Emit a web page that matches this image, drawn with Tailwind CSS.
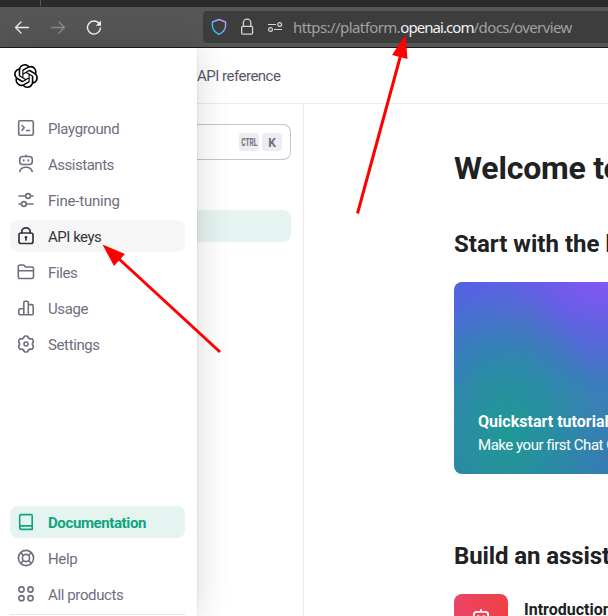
<!DOCTYPE html>
<html lang="en">
<head>
<meta charset="utf-8">
<title>Overview - OpenAI API</title>
<script src="https://cdn.jsdelivr.net/npm/@tailwindcss/browser@4"></script>
</head>
<body class="relative flex h-[616px] w-[608px] flex-col overflow-hidden bg-white font-['Roboto','Liberation_Sans',sans-serif] whitespace-nowrap">
  <!-- Browser chrome -->
  <header class="shrink-0">
    <div class="h-[7px] bg-[#2b2b2b]"><div class="ml-10 h-1.5 w-px bg-[#555]"></div></div>
    <div class="flex h-[41px] items-center border-b border-[#1c1b22] bg-[#565656] pl-[14px]">
      <svg class="size-4 text-[#f2f2f2]" viewBox="0 0 16 16" fill="none" stroke="currentColor" stroke-width="1.3" stroke-linecap="round" stroke-linejoin="round"><path d="M14.500 8.500H1.500M7 3 1.500 8.500 7 14"/></svg>
      <svg class="ml-5 size-4 text-[#8b8b8b]" viewBox="0 0 16 16" fill="none" stroke="currentColor" stroke-width="1.3" stroke-linecap="round" stroke-linejoin="round"><path d="M1.500 8.500h13M9 3 14.500 8.500 9 14"/></svg>
      <svg class="ml-5 size-4 text-[#f2f2f2]" viewBox="0 0 16 16" fill="none" stroke="currentColor" stroke-width="1.4"><path d="M13.300 4.800A6.500 6.500 0 1 0 14.500 8.500"/><path d="M15 1.500v5.200h-5.200z" fill="currentColor" stroke="none"/></svg>
      <div class="ml-[101px] flex h-8 flex-1 items-center rounded-l-[4px] bg-[#3d3d3d] pl-2">
        <svg class="h-[18px] w-4" viewBox="0 0 16 18" fill="none"><defs><linearGradient id="shield" x1="0" y1="1" x2="1" y2="0"><stop offset=".25" stop-color="#2cc4f5"/><stop offset=".85" stop-color="#b79cf5"/></linearGradient></defs><path d="M8 1.500 14.600 4v3.500c0 3.500-2.400 6.800-6.600 8.800C3.800 14.300 1.400 11 1.400 7.500V4z" stroke="url(#shield)" stroke-width="1.400" stroke-linejoin="round"/></svg>
        <svg class="ml-3 h-[18px] w-4" viewBox="0 0 16 18" fill="none" stroke="#d4d4d4" stroke-width="1.300"><rect x="2.650" y="8.300" width="10.900" height="7.800" rx="1"/><path d="M4.400 8V4.800a3.700 3.700 0 0 1 7.400 0V8"/></svg>
        <svg class="ml-3 h-[18px] w-4" viewBox="0 0 16 18" fill="none" stroke="#d4d4d4" stroke-width="1.200"><path d="M1 6.500h8M7 11.500h8"/><circle cx="12.700" cy="6.500" r="1.900"/><circle cx="3.500" cy="11.500" r="1.900"/></svg>
        <p class="ml-[10px] font-['Noto_Sans',sans-serif] text-[15px] tracking-[-0.58px] text-[#a1a1a1]">https://platform.<span class="tracking-[-0.93px] text-[#f2f2f2]">openai.com</span>/docs/overview</p>
      </div>
    </div>
  </header>

  <div class="flex min-h-0 flex-1">
    <!-- Expanded sidebar -->
    <aside class="z-10 flex w-[197px] shrink-0 flex-col bg-white pr-3 pl-[10px] shadow-[0_0_32px_rgba(0,0,0,0.16),0_0_2px_rgba(0,0,0,0.12)]">
      <svg class="mt-4 ml-1 size-6 shrink-0" viewBox="0 0 24 24" fill="#000"><path d="M22.2819 9.8211a5.9847 5.9847 0 0 0-.5157-4.9108 6.0462 6.0462 0 0 0-6.5098-2.9A6.0651 6.0651 0 0 0 4.9807 4.1818a5.9847 5.9847 0 0 0-3.9977 2.9 6.0462 6.0462 0 0 0 .7427 7.0966 5.98 5.98 0 0 0 .511 4.9107 6.051 6.051 0 0 0 6.5146 2.9001A5.9847 5.9847 0 0 0 13.2599 24a6.0557 6.0557 0 0 0 5.7718-4.2058 5.9894 5.9894 0 0 0 3.9977-2.9001 6.0557 6.0557 0 0 0-.7475-7.0729zm-9.022 12.6081a4.4755 4.4755 0 0 1-2.8764-1.0408l.1419-.0804 4.7783-2.7582a.7948.7948 0 0 0 .3927-.6813v-6.7369l2.02 1.1686a.071.071 0 0 1 .038.052v5.5826a4.504 4.504 0 0 1-4.4945 4.4944zm-9.6607-4.1254a4.4708 4.4708 0 0 1-.5346-3.0137l.142.0852 4.783 2.7582a.7712.7712 0 0 0 .7806 0l5.8428-3.3685v2.3324a.0804.0804 0 0 1-.0332.0615L9.74 19.9502a4.4992 4.4992 0 0 1-6.1408-1.6464zM2.3408 7.8956a4.485 4.485 0 0 1 2.3655-1.9728V11.6a.7664.7664 0 0 0 .3879.6765l5.8144 3.3543-2.0201 1.1685a.0757.0757 0 0 1-.071 0l-4.8303-2.7865A4.504 4.504 0 0 1 2.3408 7.872zm16.5963 3.8558L13.1038 8.364 15.1192 7.2a.0757.0757 0 0 1 .071 0l4.8303 2.7913a4.4944 4.4944 0 0 1-.6765 8.1042v-5.6772a.79.79 0 0 0-.407-.667zm2.0107-3.0231l-.142-.0852-4.7735-2.7818a.7759.7759 0 0 0-.7854 0L9.409 9.2297V6.8974a.0662.0662 0 0 1 .0284-.0615l4.8303-2.7866a4.4992 4.4992 0 0 1 6.6802 4.66zM8.3065 12.863l-2.02-1.1638a.0804.0804 0 0 1-.038-.0567V6.0742a4.4992 4.4992 0 0 1 7.3757-3.4537l-.142.0805L8.704 5.459a.7948.7948 0 0 0-.3927.6813zm1.0976-2.3654l2.602-1.4998 2.6069 1.4998v2.9994l-2.5974 1.4997-2.6067-1.4997Z"/></svg>

      <nav class="mt-6 flex flex-col gap-1 text-[15px] tracking-[-0.38px] text-[#6e6e80]">
        <a class="flex h-8 items-center gap-3 rounded-lg px-1.5"><svg class="size-5" viewBox="0 0 20 20" fill="none" stroke="currentColor" stroke-width="1.600" stroke-linecap="round" stroke-linejoin="round"><rect x="2.700" y="2.700" width="14.600" height="14.600" rx="1.500"/><path d="m6 7.500 2.300 2.300L6 12.100M10.500 12.500h3"/></svg><span class="pt-0.5">Playground</span></a>
        <a class="flex h-8 items-center gap-3 rounded-lg px-1.5"><svg class="size-5" viewBox="0 0 20 20" fill="none" stroke="currentColor" stroke-width="1.600" stroke-linecap="round" stroke-linejoin="round"><rect x="3.700" y="2.500" width="12.600" height="8" rx="3"/><path d="M10 1.200v1M3.800 17.500c.6-2.800 3.100-4.300 6.200-4.300s5.600 1.500 6.200 4.300"/><path d="M7.700 6.200v.3M12.300 6.200v.3" stroke-width="1.900"/></svg><span class="pt-0.5 tracking-[-0.48px]">Assistants</span></a>
        <a class="flex h-8 items-center gap-3 rounded-lg px-1.5"><svg class="size-5" viewBox="0 0 20 20" fill="none" stroke="currentColor" stroke-width="1.600" stroke-linecap="round"><path d="M3 6h6.500M14.700 6H17M3 14h2.300M10.500 14H17"/><circle cx="12.100" cy="6" r="2.400"/><circle cx="7.900" cy="14" r="2.400"/></svg><span class="pt-0.5 tracking-[-0.22px]">Fine-tuning</span></a>
        <a class="flex h-8 items-center gap-3 rounded-lg bg-[#f6f6f6] px-1.5 text-[#353740]"><svg class="size-5" viewBox="0 0 20 20" fill="none" stroke="currentColor" stroke-width="1.700" stroke-linecap="round"><rect x="3" y="7" width="14" height="10.500" rx="2"/><path d="M5.800 7V5.800a4.200 4 0 0 1 8.400 0V7M10 12v2"/><circle cx="10" cy="11.300" r="1.300" fill="currentColor" stroke="none"/></svg><span class="pt-0.5 tracking-[-0.48px]">API keys</span></a>
        <a class="flex h-8 items-center gap-3 rounded-lg px-1.5"><svg class="size-5" viewBox="0 0 20 20" fill="none" stroke="currentColor" stroke-width="1.600" stroke-linejoin="round"><path d="M2.300 15V4.500c0-.8.700-1.500 1.500-1.500h3.300c.5 0 .9.200 1.200.6l.7.900c.3.400.7.500 1.100.5h5.800c.9 0 1.600.7 1.600 1.500V15c0 .9-.7 1.500-1.500 1.500H3.800c-.8 0-1.500-.6-1.500-1.500zM2.300 8.700h15.200"/></svg><span class="pt-0.5">Files</span></a>
        <a class="flex h-8 items-center gap-3 rounded-lg px-1.5"><svg class="size-5" viewBox="0 0 20 20" fill="none" stroke="currentColor" stroke-width="1.600" stroke-linejoin="round"><path d="M7.800 16.800H4.200c-.8 0-1.400-.6-1.400-1.400v-3.300c0-.8.6-1.400 1.400-1.400h3.600M12.300 16.800V4.700c0-.9-.6-1.500-1.400-1.500H9.200c-.8 0-1.400.6-1.400 1.500v12.100zM12.300 16.800h3.500c.8 0 1.400-.6 1.400-1.400V8c0-.8-.6-1.400-1.400-1.400h-3.500"/></svg><span class="pt-0.5">Usage</span></a>
        <a class="flex h-8 items-center gap-3 rounded-lg px-1.5"><svg class="size-5" viewBox="0 0 20 20" fill="none" stroke="currentColor" stroke-width="1.600" stroke-linejoin="round"><path d="M8.360 2.270Q10 1.600 11.640 2.270Q12.600 5.500 15.870 4.710Q17.270 5.800 17.510 7.560Q15.200 10 17.510 12.440Q17.270 14.200 15.870 15.290Q12.600 14.500 11.640 17.730Q10 18.400 8.360 17.730Q7.400 14.500 4.130 15.290Q2.730 14.200 2.490 12.440Q4.800 10 2.490 7.560Q2.730 5.800 4.130 4.710Q7.400 5.500 8.360 2.270z"/><circle cx="10" cy="10" r="2"/></svg><span class="pt-0.5">Settings</span></a>
      </nav>

      <nav class="mt-auto flex flex-col gap-1 text-[15px] tracking-[-0.38px] text-[#6e6e80]">
        <a class="flex h-8 items-center gap-3 rounded-lg bg-[#e5f3f1] px-1.5 font-bold text-[#10a37f]"><svg class="size-5" viewBox="0 0 20 20" fill="none" stroke="currentColor" stroke-width="1.600" stroke-linejoin="round"><path d="M16.200 14V3.500c0-.5-.4-.9-.9-.9H5c-.7 0-1.300.6-1.300 1.300v11.700M16.200 13.900H5.400c-1 0-1.700.7-1.700 1.700s.7 1.800 1.700 1.800h10.800zM16.200 13.500v4"/></svg><span class="pt-0.5">Documentation</span></a>
        <a class="flex h-8 items-center gap-3 rounded-lg px-1.5"><svg class="size-5" viewBox="0 0 20 20" fill="none" stroke="currentColor" stroke-width="1.600"><circle cx="10" cy="10" r="7.600"/><circle cx="10" cy="10" r="3.600"/><path d="m4.600 4.600 2.900 2.900M12.500 12.500l2.900 2.900M15.400 4.600l-2.900 2.900M7.500 12.500l-2.900 2.900" stroke-width="1.700"/></svg><span class="pt-0.5">Help</span></a>
        <a class="flex h-8 items-center gap-3 rounded-lg px-1.5"><svg class="size-5" viewBox="0 0 20 20" fill="none" stroke="currentColor" stroke-width="1.600"><circle cx="5.500" cy="5.500" r="2.600"/><circle cx="14.500" cy="5.500" r="2.600"/><circle cx="5.500" cy="14.200" r="2.600"/><circle cx="14.500" cy="14.200" r="2.600"/></svg><span class="pt-0.5">All products</span></a>
      </nav>
      <div class="mt-[4px] h-0.5 shrink-0 border-t border-[#e3e3e6]"></div>
    </aside>

    <!-- Documentation page -->
    <div class="flex min-w-0 flex-1 flex-col">
      <div class="flex h-14 shrink-0 items-center border-b border-[#ececf1] pt-0.5 text-[15px] tracking-[-0.5px] text-[#565869]"><span>API reference</span></div>
      <div class="flex min-h-0 flex-1">
        <div class="w-[107px] shrink-0 border-r border-[#ececf1] pt-5 pr-3">
          <div class="flex h-9 items-center justify-end gap-[3px] rounded-r-lg border border-l-0 border-[#c5c5d2] pr-2 text-[#6e6e80]">
            <kbd class="flex h-[18px] w-5 items-center justify-center rounded-[3px] bg-[#ececf1] pt-px font-['Roboto'] text-[10px] font-bold"><span class="inline-block scale-x-[.66]">CTRL</span></kbd>
            <kbd class="flex h-[18px] w-5 items-center justify-center rounded-[3px] bg-[#ececf1] pt-px font-['Roboto'] text-xs font-bold">K</kbd>
          </div>
          <div class="mt-[50px] h-8 rounded-r-lg bg-[#e5f3f1]"></div>
        </div>
        <main class="min-w-0 flex-1 overflow-hidden pl-[150px] text-[#202123]">
          <h1 class="mt-[44px] text-[32px] leading-10 font-bold tracking-[-0.2px]">Welcome to the OpenAI developer platform</h1>
          <h2 class="mt-10 text-2xl font-bold tracking-[0.02px]">Start with the basics</h2>
          <div class="mt-[22px] flex h-48 w-[380px] flex-col justify-end rounded-lg bg-[radial-gradient(ellipse_95px_150px_at_54px_150px,#1f9894_0%,#1f9894a0_40%,transparent_100%),radial-gradient(ellipse_190px_100px_at_160px_0,#8556f6_0%,#7658ec99_45%,transparent_100%),linear-gradient(170deg,#4a66de_0%,#4173cd_30%,#3a80b8_55%,#3179ae_100%)] px-6 pb-[17px] text-white">
            <p class="text-base leading-6 font-bold tracking-[0.02px]">Quickstart tutorial</p>
            <p class="text-[15px] leading-[23px] tracking-[-0.47px]">Make your first Chat Completions API request</p>
          </div>
          <h2 class="mt-[66px] text-2xl font-bold tracking-[-0.1px]">Build an assistant</h2>
          <div class="mt-[22px] flex gap-4">
            <div class="flex h-[54px] w-[54px] shrink-0 justify-center rounded-lg bg-gradient-to-r from-[#eb4467] to-[#ef4043] pt-3.5 text-white"><svg class="size-6" viewBox="0 0 20 20" fill="none" stroke="currentColor" stroke-width="1.500"><rect x="4" y="3.300" width="12" height="8" rx="2.500"/><path d="M10 1v2M4 17.500c.6-2.800 2.900-4.300 6-4.300s5.400 1.500 6 4.300M7.700 6v2M12.300 6v2"/></svg></div>
            <p class="mt-1 text-base font-bold">Introduction</p>
          </div>
        </main>
      </div>
    </div>
  </div>

  <!-- Annotation arrows -->
  <svg class="absolute inset-0 z-20 h-[616px] w-[608px]" viewBox="0 0 608 616" fill="#f00" stroke="none"><path d="M357.500 213.500 401 54" stroke="#f00" stroke-width="3"/><path d="m405.500 35 2 24-15.500-4z"/><path d="M220 352 118 258" stroke="#f00" stroke-width="3"/><path d="m102.500 244.500 22.500 9.500-11 12z"/></svg>
</body>
</html>
